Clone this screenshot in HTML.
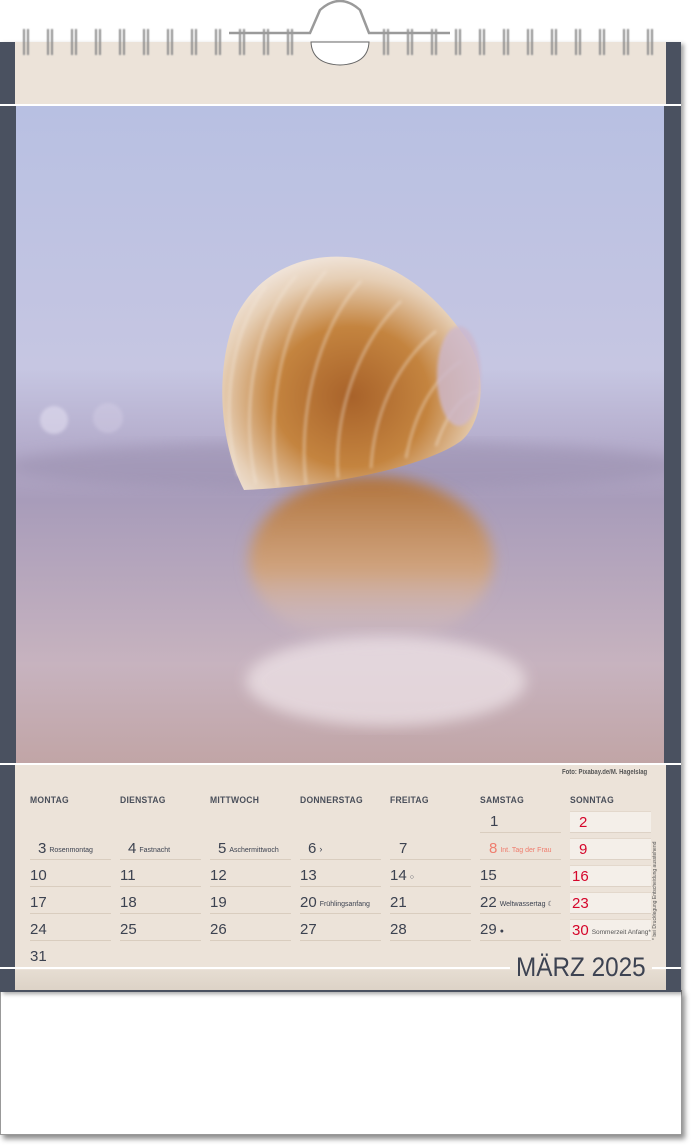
<!DOCTYPE html>
<html><head><meta charset="utf-8"><style>
*{margin:0;padding:0;box-sizing:border-box}
body{width:692px;height:1145px;background:#fff;position:relative;overflow:hidden;font-family:"Liberation Sans",sans-serif}
.abs{position:absolute}
.hd{position:absolute;top:795px;font-size:9.5px;color:#4a4f5a;letter-spacing:.3px;font-weight:bold;transform:scaleX(.9);transform-origin:left}
.c{position:absolute;width:81px;height:22px;border-bottom:1.5px solid #d9cdbf;font-size:15px;color:#3c4250;line-height:22px;white-space:nowrap}
.c small{font-size:7px;margin-left:3px;vertical-align:1px}
.s{background:#f4efe9;color:#d5062b;border-bottom:1.5px solid #ddd2c6;border-top:1.5px solid #e3d8cc;padding-left:2px}
</style></head><body>
<div class="abs" style="left:0;top:990px;width:682px;height:145px;background:#fff;border:1px solid #999;box-shadow:3px 4px 5px rgba(0,0,0,.45)"></div>
<div class="abs" style="left:0;top:42px;width:681px;height:950px;background:#4a5160;box-shadow:3px 2px 4px rgba(0,0,0,.35)"></div>
<div class="abs" style="left:15px;top:42px;width:651px;height:62px;background:#ece3d9"></div>
<div class="abs" style="left:0;top:104px;width:681px;height:2px;background:#fff"></div>
<svg class="abs" style="left:16px;top:106px" width="648" height="657" viewBox="0 0 648 657">
<defs>
<linearGradient id="bg" x1="0" y1="0" x2="0" y2="1">
<stop offset="0" stop-color="#b8c0e2"/><stop offset=".4" stop-color="#c6c6e2"/><stop offset=".52" stop-color="#b4accb"/><stop offset=".6" stop-color="#a89cba"/><stop offset=".85" stop-color="#c7b3bf"/><stop offset="1" stop-color="#c1a5a6"/></linearGradient>
<radialGradient id="sh" cx=".5" cy=".6" r=".6"><stop offset="0" stop-color="#a8622a"/><stop offset=".5" stop-color="#c4843f"/><stop offset=".85" stop-color="#e6cfb6"/><stop offset="1" stop-color="#efe2d6"/></radialGradient>
<linearGradient id="rf" x1="0" y1="0" x2="0" y2="1"><stop offset="0" stop-color="#b0723a"/><stop offset=".55" stop-color="#d4a272" stop-opacity=".85"/><stop offset="1" stop-color="#ead8d5" stop-opacity="0"/></linearGradient>
<filter id="bl"><feGaussianBlur stdDeviation="7"/></filter>
<filter id="bl2"><feGaussianBlur stdDeviation="1.5"/></filter>
</defs>
<rect width="648" height="657" fill="url(#bg)"/>
<ellipse cx="330" cy="360" rx="340" ry="25" fill="#9a8fae" opacity=".55" filter="url(#bl)"/>
<ellipse cx="355" cy="455" rx="122" ry="85" fill="url(#rf)" filter="url(#bl)"/>
<ellipse cx="370" cy="575" rx="140" ry="45" fill="#ede2e6" opacity=".75" filter="url(#bl)"/>
<path d="M228 384 C205 340 198 270 218 215 C240 165 290 145 340 152 C390 160 430 200 455 240 C470 270 468 315 445 335 C410 360 320 380 228 384Z" fill="url(#sh)"/>
<g stroke="#f4e8dc" stroke-width="1.5" fill="none" opacity=".75" filter="url(#bl2)">
<path d="M222 370 C205 310 212 230 250 180"/><path d="M240 378 C225 310 235 220 280 170"/><path d="M262 380 C250 310 262 220 310 165"/><path d="M290 378 C282 310 300 225 345 175"/><path d="M322 372 C318 310 340 240 385 195"/><path d="M355 362 C358 310 378 260 420 225"/><path d="M390 352 C398 310 415 275 445 255"/><path d="M420 340 C430 310 445 290 462 285"/></g>
<ellipse cx="443" cy="270" rx="22" ry="50" fill="#cdb8cc" opacity=".8" filter="url(#bl2)"/>
<circle cx="38" cy="314" r="14" fill="#e2def0" opacity=".6" filter="url(#bl2)"/>
<circle cx="92" cy="312" r="15" fill="#d8d2e8" opacity=".4" filter="url(#bl2)"/>
</svg>
<div class="abs" style="left:0;top:763px;width:681px;height:2px;background:#fff"></div>
<div class="abs" style="left:15px;top:765px;width:651px;height:225px;background:#ece3d9"></div>
<div class="abs" style="left:15px;top:970px;width:651px;height:20px;background:linear-gradient(#e6ddd2,#ddd3c7)"></div>
<div class="abs" style="left:0;top:967px;width:510px;height:2px;background:#fff"></div>
<div class="abs" style="left:652px;top:967px;width:29px;height:2px;background:#fff"></div>
<div class="abs" style="left:562px;top:769px;font-size:7px;color:#555;font-weight:bold;transform:scaleX(.85);transform-origin:left;white-space:nowrap">Foto: Pixabay.de/M. Hagelslag</div>
<div class="abs" style="left:516px;top:952px;font-size:27px;color:#3d4352;line-height:30px;white-space:nowrap;transform:scaleX(.9);transform-origin:left">MÄRZ 2025</div>
<div class="abs" style="left:652px;top:940px;font-size:5px;color:#555;transform:rotate(-90deg);transform-origin:left top;white-space:nowrap">* bei Drucklegung Entscheidung ausstehend</div>
<div class="hd" style="left:30px">MONTAG</div><div class="hd" style="left:120px">DIENSTAG</div><div class="hd" style="left:210px">MITTWOCH</div><div class="hd" style="left:300px">DONNERSTAG</div><div class="hd" style="left:390px">FREITAG</div><div class="hd" style="left:480px">SAMSTAG</div><div class="hd" style="left:570px">SONNTAG</div>
<div class="c" style="left:480px;top:811px;padding-left:10px">1</div>
<div class="c s" style="left:570px;top:811px;padding-left:9px">2</div>
<div class="c" style="left:30px;top:838px;padding-left:8px">3<small>Rosenmontag</small></div>
<div class="c" style="left:120px;top:838px;padding-left:8px">4<small>Fastnacht</small></div>
<div class="c" style="left:210px;top:838px;padding-left:8px">5<small>Aschermittwoch</small></div>
<div class="c" style="left:300px;top:838px;padding-left:8px">6<small style="font-size:9px">›</small></div>
<div class="c" style="left:390px;top:838px;padding-left:9px">7</div>
<div class="c" style="left:480px;top:838px;padding-left:9px;color:#ef7d6e">8<small>Int. Tag der Frau</small></div>
<div class="c s" style="left:570px;top:838px;padding-left:9px">9</div>
<div class="c" style="left:30px;top:865px">10</div><div class="c" style="left:120px;top:865px">11</div><div class="c" style="left:210px;top:865px">12</div><div class="c" style="left:300px;top:865px">13</div><div class="c" style="left:390px;top:865px">14<small>○</small></div><div class="c" style="left:480px;top:865px">15</div><div class="c s" style="left:570px;top:865px">16</div>
<div class="c" style="left:30px;top:892px">17</div><div class="c" style="left:120px;top:892px">18</div><div class="c" style="left:210px;top:892px">19</div><div class="c" style="left:300px;top:892px">20<small>Frühlingsanfang</small></div><div class="c" style="left:390px;top:892px">21</div><div class="c" style="left:480px;top:892px">22<small>Weltwassertag ☾</small></div><div class="c s" style="left:570px;top:892px">23</div>
<div class="c" style="left:30px;top:919px">24</div><div class="c" style="left:120px;top:919px">25</div><div class="c" style="left:210px;top:919px">26</div><div class="c" style="left:300px;top:919px">27</div><div class="c" style="left:390px;top:919px">28</div><div class="c" style="left:480px;top:919px">29<small>●</small></div><div class="c s" style="left:570px;top:919px">30<small style="color:#555;font-size:6.5px">Sommerzeit Anfang*</small></div>
<div class="c" style="left:30px;top:946px;border:none">31</div>
<svg class="abs" style="left:0;top:0" width="692" height="70" viewBox="0 0 692 70">
<defs><filter id="sd"><feGaussianBlur stdDeviation="0.9"/></filter></defs>
<g stroke="#8e8e8e" stroke-width="2" filter="url(#sd)">
<path d="M24 29V55M28 29V55M48 29V55M52 29V55M72 29V55M76 29V55M96 29V55M100 29V55M120 29V55M124 29V55M144 29V55M148 29V55M168 29V55M172 29V55M192 29V55M196 29V55M216 29V55M220 29V55M240 29V55M244 29V55M264 29V55M268 29V55M288 29V55M292 29V55M384 29V55M388 29V55M408 29V55M412 29V55M432 29V55M436 29V55M456 29V55M460 29V55M480 29V55M484 29V55M504 29V55M508 29V55M528 29V55M532 29V55M552 29V55M556 29V55M576 29V55M580 29V55M600 29V55M604 29V55M624 29V55M628 29V55M648 29V55M652 29V55"/>
</g>
<path d="M229 33 H310 L320 10 Q340 -8 360 10 L369 33 H450" stroke="#9a9a9a" stroke-width="2.5" fill="none"/>
<path d="M311 42 Q312 64 340 65 Q368 64 369 42 Z" fill="#fff" stroke="#666" stroke-width="1"/>
</svg>
</body></html>
